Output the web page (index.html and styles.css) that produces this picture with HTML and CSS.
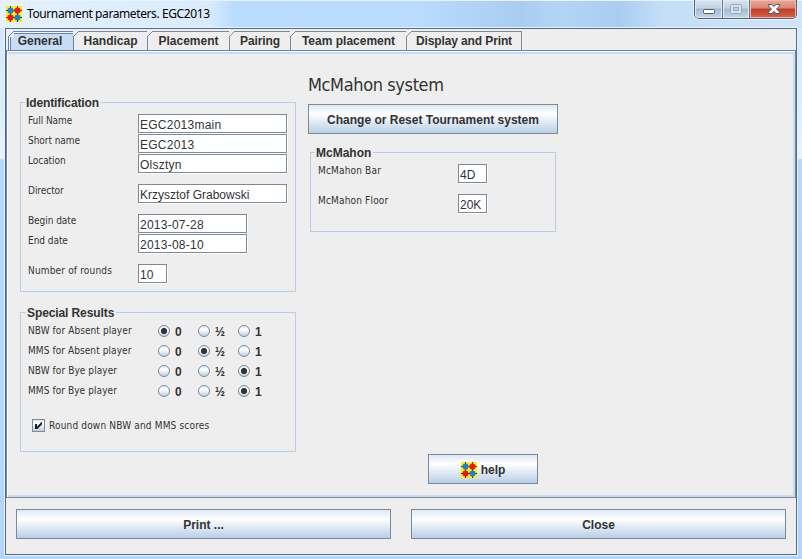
FILE: index.html
```
<!DOCTYPE html>
<html lang="en">
<head>
<meta charset="utf-8">
<title>Tournament parameters. EGC2013</title>
<link rel="stylesheet" href="styles.css">
</head>
<body>
<svg class="defs" width="0" height="0">
  <symbol id="logo" viewBox="0 0 16 16">
    <rect width="16" height="16" fill="#ffee10"/>
    <path d="M4.5 0V16M11.5 0V16M0 4.5H16M0 11.5H16" stroke="#333" stroke-width="1"/>
    <circle cx="4.5" cy="4.5" r="3.100" fill="#1287d8"/><circle cx="11.5" cy="4.5" r="3.100" fill="#f01414"/>
    <circle cx="4.5" cy="11.5" r="3.100" fill="#f01414"/><circle cx="11.5" cy="11.5" r="3.100" fill="#1287d8"/>
  </symbol>
</svg>
<header class="titlebar">
  <svg class="app-icon" width="16" height="16"><use href="#logo"/></svg>
  <span class="title">Tournament parameters. EGC2013</span>
  <div class="controls">
    <span class="ctl min"><svg width="28" height="18"><rect x="8.5" y="9.5" width="11" height="4" rx="1" fill="#fff" stroke="#535a68"/></svg></span>
    <span class="ctl max"><svg width="26" height="18"><rect x="7.5" y="4.5" width="11" height="9" rx="1" fill="#d5e2ef" stroke="#9aabbf"/><rect x="10.5" y="7.5" width="5" height="3" fill="#c0d0e2" stroke="#9aabbf"/></svg></span>
    <span class="ctl close"><svg width="46" height="18"><path d="M18.500 4.500h3.600l1.900 2.200 1.900-2.200h3.600v1.500l-3 3 3 3v1.500h-3.600l-1.900-2.200-1.900 2.200h-3.600v-1.500l3-3-3-3z" fill="#fff" stroke="#535666"/></svg></span>
  </div>
</header>
<main class="client">
  <nav class="tabs">
    <span class="tab active t1">General</span><span class="tab t2">Handicap</span><span class="tab t3">Placement</span><span class="tab t4">Pairing</span><span class="tab t5">Team placement</span><span class="tab t6">Display and Print</span>
  </nav>
  <section class="panel">
    <div class="left">
      <div class="group ident">
        <h2><span>Identification</span></h2>
        <div class="row"><label>Full Name</label><span class="field wide">EGC2013main</span></div>
        <div class="row"><label>Short name</label><span class="field wide">EGC2013</span></div>
        <div class="row gap"><label>Location</label><span class="field wide">Olsztyn</span></div>
        <div class="row gap"><label>Director</label><span class="field wide name">Krzysztof Grabowski</span></div>
        <div class="row"><label>Begin date</label><span class="field date">2013-07-28</span></div>
        <div class="row gap"><label>End date</label><span class="field date">2013-08-10</span></div>
        <div class="row"><label class="loose">Number of rounds</label><span class="field small">10</span></div>
      </div>
      <div class="group special">
        <h2><span>Special Results</span></h2>
        <div class="rrow"><label>NBW for Absent player</label><i class="radio on"></i><b>0</b><i class="radio"></i><b>½</b><i class="radio"></i><b>1</b></div>
        <div class="rrow"><label>MMS for Absent player</label><i class="radio"></i><b>0</b><i class="radio on"></i><b>½</b><i class="radio"></i><b>1</b></div>
        <div class="rrow"><label>NBW for Bye player</label><i class="radio"></i><b>0</b><i class="radio"></i><b>½</b><i class="radio on"></i><b>1</b></div>
        <div class="rrow"><label>MMS for Bye player</label><i class="radio"></i><b>0</b><i class="radio"></i><b>½</b><i class="radio on"></i><b>1</b></div>
        <div class="check"><span class="box"><svg width="11" height="11"><path d="M2 4h2v2.500L8.500 2H9v2.500L4.500 9H2z" fill="#222"/></svg></span><label class="loose">Round down NBW and MMS scores</label></div>
      </div>
    </div>
    <div class="right">
      <h1>McMahon system</h1>
      <button class="btn change">Change or Reset Tournament system</button>
      <div class="group mcm">
        <h2><span>McMahon</span></h2>
        <div class="row gap"><label class="loose">McMahon Bar</label><span class="field small">4D</span></div>
        <div class="row"><label class="loose">McMahon Floor</label><span class="field small">20K</span></div>
      </div>
      <button class="btn help"><svg width="16" height="16"><use href="#logo"/></svg>help</button>
    </div>
  </section>
  <footer class="actions">
    <button class="btn">Print ...</button>
    <button class="btn">Close</button>
  </footer>
</main>
</body>
</html>
```
FILE: styles.css
```
* { box-sizing: border-box; }
body {
  margin: 0; width: 802px; height: 559px; overflow: hidden;
  background: linear-gradient(#d4e8fc 0, #dcedfd 110px, #e9f4fe 158px, #b5d8fc 160px, #b3d6fa 100%);
  font: bold 12px "Liberation Sans", sans-serif; color: #333;
}
.defs { position: absolute; }
.titlebar {
  height: 28px; display: flex; align-items: flex-start; padding-left: 6px;
  background: linear-gradient(90deg, #e4f1fe 0, #d9ebfd 210px, #b9dbfd 235px, #b9dbfd 420px, #a9cdf0 520px, #b3d4f5 560px, #a9cdf0 620px, #c4def8 660px, #cfe5fb 100%);
  border-top: 1px solid #e8f4ff;
}
.app-icon { margin-top: 5px; }
.title { margin: 4px 0 0 5px; font: 12px/18px "Noto Sans", sans-serif; letter-spacing: -0.4px; color: #000; }
.controls {
  display: flex; height: 19px; width: 103px; margin: -1px 5px 0 auto;
  border: 1px solid #535d6d; border-top: 0; border-radius: 0 0 5px 5px; overflow: hidden;
  box-shadow: 0 0 0 1px #e5f2ff;
}
.ctl { background: linear-gradient(#d7e3f0, #c3d3e4 45%, #a4b8cf 50%, #c4d8ec); box-shadow: inset 0 0 0 1px #e1ebf5; height: 18px; }
.min { width: 28px; border-right: 1px solid #69788c; }
.max { width: 27px; border-right: 1px solid #69788c; }
.close { width: 46px; background: linear-gradient(#e9a99c, #d98673 45%, #c23c24 50%, #d3674b); box-shadow: inset 0 0 0 1px #efbbae; }
.client {
  margin: 0 5px; width: 792px; height: 527px; background: #eee;
  border: 1px solid #5a6b80; box-shadow: 0 0 0 1px #e3f2ff;
}
.tabs { height: 21px; padding: 2px 0 0 2px; display: flex; }
.tab {
  position: relative; height: 19px; border-top: 1px solid #7a8a99; border-right: 1px solid #7a8a99;
  text-align: center; line-height: 19px; white-space: nowrap;
}
.tab::before {
  content: ""; position: absolute; left: -1px; top: -1px; width: 6px; height: 6px;
  background: linear-gradient(135deg, #eee 42%, #7a8a99 43%, #7a8a99 57%, #eee 58%);
}
.t1 { width: 66px; } .t2 { width: 74px; } .t3 { width: 82px; } .t4 { width: 61px; letter-spacing: -.1px; } .t5 { width: 116px; } .t6 { width: 115px; letter-spacing: -.12px; }
.active { background: #c8ddf2; border: 1px solid #6382bf; border-bottom: 0; box-shadow: inset 1px 1px #f5f9ff, inset 2px 2px #6382bf; padding-right: 2px; }
.active::before { background: linear-gradient(135deg, #eee 42%, #6382bf 43%, #6382bf 57%, #e8f1fb 58%); }
.panel {
  height: 448px; display: flex; border: 1px solid #6382bf; border-right-color: #7a8a99; border-bottom-color: #7a8a99;
  box-shadow: inset 1px 1px #fff, inset 0 3px #c8ddf2, inset -2px -2px #c8ddf2;
  padding-left: 13px;
}
.left { width: 288px; padding-top: 51px; }
.group { border: 1px solid #b8cfe5; padding-left: 7px; }
.group h2 { margin: -8px 0 0 -3px; height: 19px; font-size: 12px; line-height: 17px; }
.group h2 span { background: #eee; padding: 0 2px 0 1px; }
.ident { width: 276px; height: 190px; }
.ident h2 { letter-spacing: -.12px; }
.special { width: 276px; height: 140px; margin-top: 20px; }
.row { display: flex; height: 20px; }
.row.gap { margin-bottom: 10px; }
label { font: 10px/14px "DejaVu Sans Condensed", "DejaVu Sans", sans-serif; width: 110px; letter-spacing: -0.05px; white-space: nowrap; }
label.loose { letter-spacing: .17px; }
.field {
  height: 19px; background: #fff; border: 1px solid #7a8a99; padding-left: 1px;
  box-shadow: 1px 1px #fff; font: 12px/20px "Liberation Sans", sans-serif; letter-spacing: .25px; white-space: nowrap;
}
.field.name { letter-spacing: 0; }
.wide { width: 149px; } .date { width: 109px; } .small { width: 29px; letter-spacing: 0; }
.special h2 { height: 16px; letter-spacing: -.1px; padding-left: 1px; }
.rrow { display: flex; height: 20px; align-items: center; }
.rrow label { width: 130px; letter-spacing: .08px; }
.radio { width: 12px; height: 12px; border-radius: 50%; border: 1px solid #7a8a99; background: linear-gradient(#dde8f3, #fff 35%, #b8cfe5); flex: none; }
.radio.on { background: radial-gradient(circle, #333 0 2.8px, transparent 3.3px), linear-gradient(#dde8f3, #fff 35%, #b8cfe5); }
.rrow b { width: 28px; padding: 2px 0 0 5px; }
.check { display: flex; align-items: center; margin: 18px 0 0 4px; height: 13px; }
.box { width: 13px; height: 13px; border: 1px solid #7a8a99; background: linear-gradient(#dde8f3, #fff 35%, #b8cfe5); margin-right: 4px; display: flex; }
.right { width: 260px; padding-top: 20px; display: flex; flex-direction: column; align-items: flex-start; }
h1 { margin: 0; height: 33px; font: 18px/28px "DejaVu Sans Condensed", sans-serif; letter-spacing: -.38px; white-space: nowrap; }
.btn {
  height: 30px; border: 1px solid #7a8a99; padding: 1px 0 0; color: #333; font: bold 12px "Liberation Sans", sans-serif;
  background: linear-gradient(#dde8f3, #fff 32%, #b8cfe5); display: flex; align-items: center; justify-content: center; gap: 4px;
}
.change { width: 250px; }
.mcm { width: 246px; height: 80px; margin: 18px 0 0 2px; }
.mcm label { width: 140px; }
.help { width: 110px; margin: 222px 0 0 120px; }
.actions { display: flex; gap: 20px; padding: 11px 10px 0; }
.actions .btn { width: 375px; }
```
